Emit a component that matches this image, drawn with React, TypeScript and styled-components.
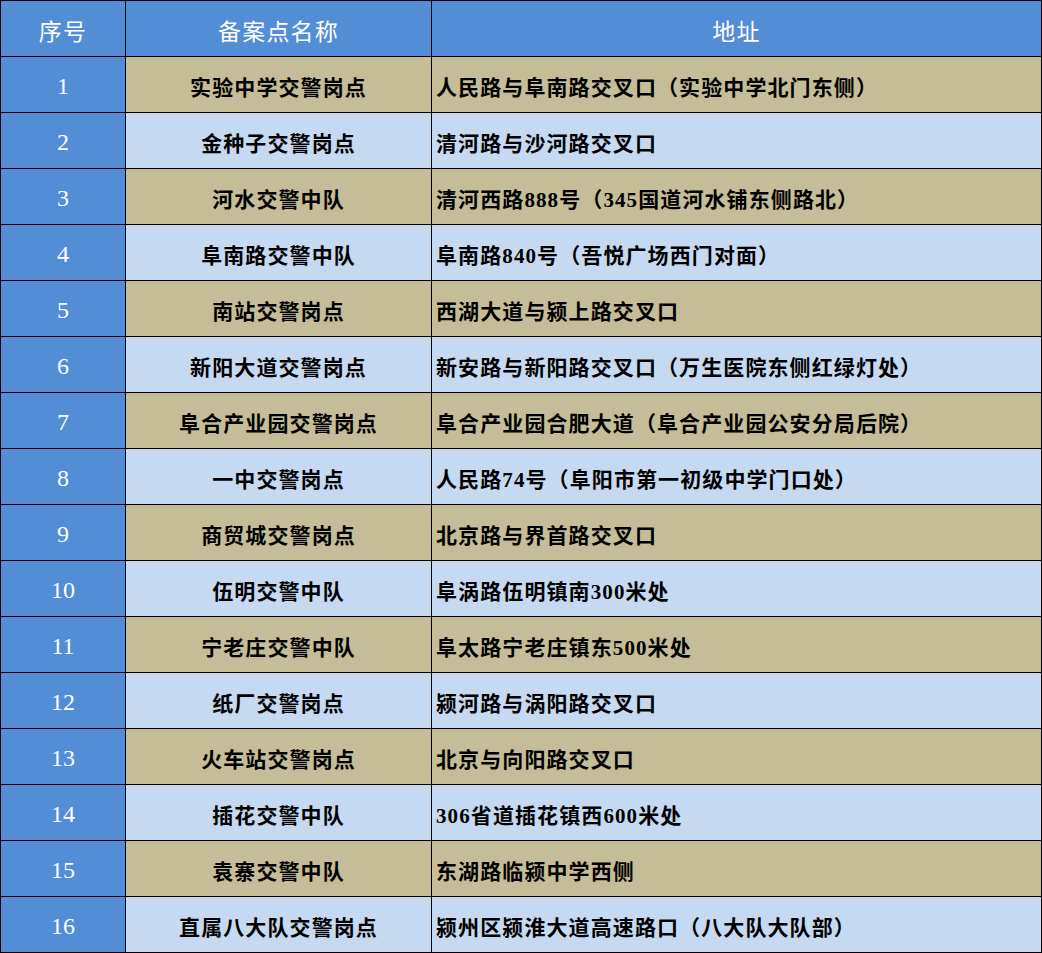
import React from "react";
import styled, { createGlobalStyle } from "styled-components";

const GlobalStyle = createGlobalStyle`
  html, body { margin: 0; padding: 0; background: #ffffff; }
  body { font-family: "Liberation Serif", "Noto Sans CJK SC", serif; }
`;

const rows: [string, string][] = [
  ["实验中学交警岗点", "人民路与阜南路交叉口（实验中学北门东侧）"],
  ["金种子交警岗点", "清河路与沙河路交叉口"],
  ["河水交警中队", "清河西路888号（345国道河水铺东侧路北）"],
  ["阜南路交警中队", "阜南路840号（吾悦广场西门对面）"],
  ["南站交警岗点", "西湖大道与颍上路交叉口"],
  ["新阳大道交警岗点", "新安路与新阳路交叉口（万生医院东侧红绿灯处）"],
  ["阜合产业园交警岗点", "阜合产业园合肥大道（阜合产业园公安分局后院）"],
  ["一中交警岗点", "人民路74号（阜阳市第一初级中学门口处）"],
  ["商贸城交警岗点", "北京路与界首路交叉口"],
  ["伍明交警中队", "阜涡路伍明镇南300米处"],
  ["宁老庄交警中队", "阜太路宁老庄镇东500米处"],
  ["纸厂交警岗点", "颍河路与涡阳路交叉口"],
  ["火车站交警岗点", "北京与向阳路交叉口"],
  ["插花交警中队", "306省道插花镇西600米处"],
  ["袁寨交警中队", "东湖路临颍中学西侧"],
  ["直属八大队交警岗点", "颍州区颍淮大道高速路口（八大队大队部）"],
];

const Sheet = styled.div`
  display: grid;
  grid-template-columns: 124px 305px 609px;
  grid-auto-rows: 55px;
  gap: 1px;
  padding: 1px;
  width: 1040px;
  background: #000000;
`;

const HeaderCell = styled.div`
  display: flex;
  align-items: center;
  justify-content: center;
  background: #538dd5;
  color: #ffffff;
  font-family: "Liberation Serif", "Noto Sans CJK SC", serif;
  font-size: 23px;
  letter-spacing: 1.2px;
  padding-top: 2px;
`;

const IndexCell = styled.div`
  display: flex;
  align-items: center;
  justify-content: center;
  background: #538dd5;
  color: #ffffff;
  font-family: "Liberation Serif", serif;
  font-size: 24px;
  padding-top: 3px;
`;

type Tone = "tan" | "blue";

const DataCell = styled.div<{ $tone: Tone; $align: "center" | "left" }>`
  display: flex;
  align-items: center;
  justify-content: ${(p) => (p.$align === "center" ? "center" : "flex-start")};
  padding: 2px 0 0 ${(p) => (p.$align === "center" ? "0" : "4px")};
  background: ${(p) => (p.$tone === "tan" ? "#c4bd97" : "#c5d9f1")};
  color: #000000;
  font-family: "Liberation Serif", "Noto Sans CJK SC", serif;
  font-weight: 600;
  font-size: 21px;
  letter-spacing: 1.1px;
  white-space: nowrap;
`;

export default function App() {
  return (
    <>
      <GlobalStyle />
      <Sheet>
        <HeaderCell>序号</HeaderCell>
        <HeaderCell>备案点名称</HeaderCell>
        <HeaderCell>地址</HeaderCell>
        {rows.map(([name, addr], i) => {
          const tone: Tone = i % 2 === 0 ? "tan" : "blue";
          return (
            <React.Fragment key={i}>
              <IndexCell>{i + 1}</IndexCell>
              <DataCell $tone={tone} $align="center">{name}</DataCell>
              <DataCell $tone={tone} $align="left">{addr}</DataCell>
            </React.Fragment>
          );
        })}
      </Sheet>
    </>
  );
}
